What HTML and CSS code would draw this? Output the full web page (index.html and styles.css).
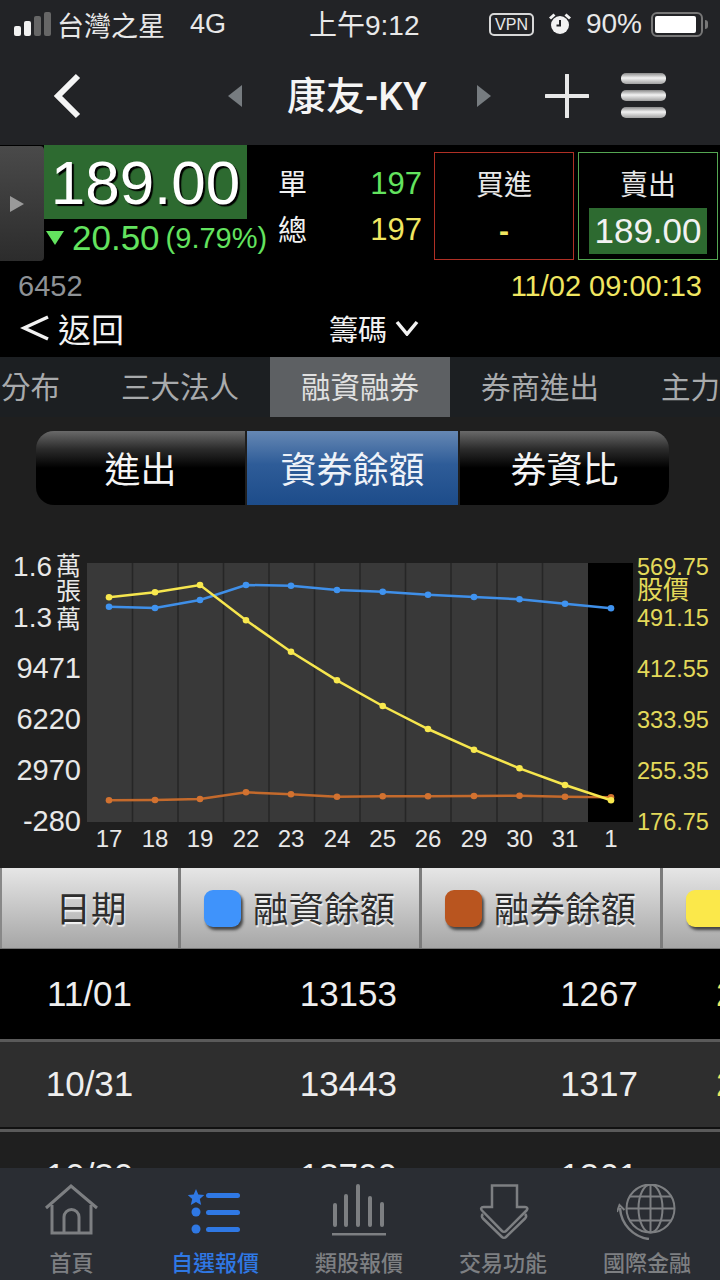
FILE: index.html
```html
<!DOCTYPE html>
<html lang="zh-Hant">
  <head>
    <meta charset="UTF-8" />
    <meta name="viewport" content="width=device-width, initial-scale=1.0" />
    <title>康友-KY</title>
    <link rel="stylesheet" href="styles.css">
  </head>
  <body>
    <div class="status-bar">
      <div class="status-left">
        <div class="signal"><i></i><i></i><i class="off"></i><i class="off"></i></div>
        <span class="carrier">台灣之星</span>
        <span class="network">4G</span>
      </div>
      <div class="status-time">上午9:12</div>
      <div class="status-right">
        <span class="vpn">VPN</span>
        <svg class="alarm" width="24" height="24" viewBox="0 0 24 24">
          <circle cx="12" cy="13" r="9" fill="#f2f2f2" />
          <path d="M12 8v5.5H8.5" fill="none" stroke="#222326" stroke-width="2" />
          <path d="M2 6.5 6.5 2.5M22 6.5 17.5 2.5" stroke="#f2f2f2" stroke-width="3" />
        </svg>
        <span class="pct">90%</span>
        <div class="battery"><div class="battery-level"></div></div>
        <div class="battery-tip"></div>
      </div>
    </div>

    <div class="nav-bar">
      <svg class="nav-back" width="32" height="48" viewBox="0 0 32 48">
        <path d="M26 4 6 24l20 20" fill="none" stroke="#f5f5f5" stroke-width="6" />
      </svg>
      <div class="nav-title">
        <div class="arrow-left"></div>
        <span class="stock-name">康友-KY</span>
        <div class="arrow-right"></div>
      </div>
      <svg class="nav-plus" width="44" height="44" viewBox="0 0 44 44">
        <path d="M22 1v42M1 22h42" stroke="#e8e8e8" stroke-width="4" stroke-linecap="round" />
      </svg>
      <div class="nav-menu"><i></i><i></i><i></i></div>
    </div>

    <div class="quote">
      <div class="quote-main">
        <div class="drawer"><div class="drawer-arrow"></div></div>
        <div class="price-block">
          <div class="price">189.00</div>
          <div class="change"><span class="down-arrow"></span><span class="change-val">20.50</span><span class="change-pct">(9.79%)</span></div>
        </div>
        <div class="volumes">
          <div class="vol-row"><span>單</span><b class="green">197</b></div>
          <div class="vol-row"><span>總</span><b class="yellow">197</b></div>
        </div>
        <div class="order-box buy">
          <div class="order-label">買進</div>
          <div class="order-val">-</div>
        </div>
        <div class="order-box sell">
          <div class="order-label">賣出</div>
          <div class="order-val">189.00</div>
        </div>
      </div>
      <div class="quote-info">
        <span class="code">6452</span>
        <span class="stamp">11/02 09:00:13</span>
      </div>
      <div class="quote-actions">
        <div class="back-link">
          <svg width="30" height="28" viewBox="0 0 30 28"><path d="M28 3 4 14l24 11" fill="none" stroke="#f2f2f2" stroke-width="3.5" /></svg>
          <span>返回</span>
        </div>
        <div class="chips">
          <span>籌碼</span>
          <svg width="24" height="16" viewBox="0 0 24 16"><path d="M2 2l10 12L22 2" fill="none" stroke="#f2f2f2" stroke-width="3.5" /></svg>
        </div>
      </div>
    </div>

    <div class="tabs">
      <div class="tab tab-first">分布</div>
      <div class="tab">三大法人</div>
      <div class="tab active">融資融券</div>
      <div class="tab">券商進出</div>
      <div class="tab tab-last">主力</div>
    </div>

    <div class="content">
      <div class="segment">
        <div class="seg-item">進出</div>
        <div class="seg-item selected">資券餘額</div>
        <div class="seg-item">券資比</div>
      </div>

      <!-- 차트 -->
      <svg class="chart" width="720" height="320" viewBox="0 545 720 320">
        <rect x="87" y="563" width="501" height="259" fill="#393939" />
        <rect x="588" y="563" width="45" height="259" fill="#000" />
        <path d="M132.5 563v259M178 563v259M223.5 563v259M269 563v259M314.5 563v259M360 563v259M405.5 563v259M451 563v259M497 563v259M542.5 563v259" stroke="#262626" stroke-width="1.5" />
        <polyline class="line-blue" points="109,606.7 155,608 200,600 246,585 291,585.7 337,590 382.7,591.7 428,594.7 474,597 519.5,599.3 565,603.7 611,608.3" />
        <g class="dots-blue"></g>
        <polyline class="line-orange" points="109,800.3 155,800 200,799 246,792.3 291,794.3 337,796.7 382.7,796.3 428,796.3 474,796 519.5,795.7 565,796.7 611,797.3" />
        <g class="dots-orange"></g>
        <polyline class="line-yellow" points="109,597.3 155,592.3 200,585 246,620.3 291,651.7 337,680.3 382.7,706 428,729 474,749.7 519.5,768.3 565,785 611,800.3" />
        <g class="dots-yellow"></g>

        <g class="axis-left">
          <text class="axis-short" x="52" y="576" text-anchor="end">1.6</text>
          <text class="axis-unit" x="81" y="575" text-anchor="end">萬</text>
          <text class="axis-unit" x="81" y="600" text-anchor="end">張</text>
          <text class="axis-short" x="52" y="627" text-anchor="end">1.3</text>
          <text class="axis-unit" x="81" y="628" text-anchor="end">萬</text>
          <text x="81" y="678" text-anchor="end">9471</text>
          <text x="81" y="729" text-anchor="end">6220</text>
          <text x="81" y="780" text-anchor="end">2970</text>
          <text x="81" y="831" text-anchor="end">-280</text>
        </g>
        <g class="axis-right">
          <text x="637" y="575">569.75</text>
          <text x="637" y="599" class="axis-cjk">股價</text>
          <text x="637" y="626">491.15</text>
          <text x="637" y="677">412.55</text>
          <text x="637" y="728">333.95</text>
          <text x="637" y="779">255.35</text>
          <text x="637" y="830">176.75</text>
        </g>
        <g class="axis-bottom" text-anchor="middle">
          <text x="109" y="847">17</text>
          <text x="155" y="847">18</text>
          <text x="200" y="847">19</text>
          <text x="246" y="847">22</text>
          <text x="291" y="847">23</text>
          <text x="337" y="847">24</text>
          <text x="382.7" y="847">25</text>
          <text x="428" y="847">26</text>
          <text x="474" y="847">29</text>
          <text x="519.5" y="847">30</text>
          <text x="565" y="847">31</text>
          <text x="611" y="847">1</text>
        </g>
      </svg>

      <div class="table-head">
        <div class="th th-date">日期</div>
        <div class="th th-col"><span class="swatch blue"></span>融資餘額</div>
        <div class="th th-col"><span class="swatch orange"></span>融券餘額</div>
        <div class="th th-rest"><span class="swatch yel"></span></div>
      </div>
      <div class="row row-black">
        <span class="c-date">11/01</span><span class="c-a">13153</span><span class="c-b">1267</span><span class="c-c">2</span>
      </div>
      <div class="row row-gray">
        <span class="c-date">10/31</span><span class="c-a">13443</span><span class="c-b">1317</span><span class="c-c">2</span>
      </div>
      <div class="row row-dark">
        <span class="c-date">10/30</span><span class="c-a">13700</span><span class="c-b">1261</span>
      </div>
    </div>

    <div class="tab-bar">
      <div class="tb-item">
        <svg width="56" height="56" viewBox="0 0 56 56" fill="none" stroke="#7d7f82" stroke-width="3">
          <path d="M2 24 27 2l26 22" />
          <path d="M8 21v28h39V21" />
          <path d="M20 49V33a7.500 7.500 0 0 1 15 0v16" />
        </svg>
        <span>首頁</span>
      </div>
      <div class="tb-item current">
        <svg width="56" height="56" viewBox="0 0 56 56" fill="#2f78e4">
          <path d="M8 5l2.300 5.500 6 .5-4.500 4 1.400 6L8 18l-5.200 3 1.400-6L-.3 11l6-.5z" />
          <circle cx="8" cy="28" r="4.500" />
          <circle cx="8" cy="45" r="4.500" />
          <rect x="18" y="9" width="34" height="5" rx="2.500" />
          <rect x="18" y="26" width="34" height="5" rx="2.500" />
          <rect x="18" y="43" width="34" height="5" rx="2.500" />
        </svg>
        <span>自選報價</span>
      </div>
      <div class="tb-item">
        <svg width="56" height="56" viewBox="0 0 56 56" fill="#7d7f82">
          <rect x="1" y="19" width="4" height="24" rx="2" />
          <rect x="12" y="10" width="4" height="33" rx="2" />
          <rect x="24" y="0" width="4" height="43" rx="2" />
          <rect x="36" y="12" width="4" height="31" rx="2" />
          <rect x="48" y="18" width="4" height="25" rx="2" />
          <rect x="0" y="49" width="54" height="2.500" />
        </svg>
        <span>類股報價</span>
      </div>
      <div class="tb-item">
        <svg width="56" height="56" viewBox="0 0 56 56" fill="none" stroke="#7d7f82" stroke-width="2.500">
          <path d="M16 1.500h25v21.500h8c2.500 0 3 2 1.500 3.500L30 47c-1 1-3 1-4 0L6 26.500C4.500 25 5 23 7.500 23H16z" />
          <path d="M7 30c-1.500 1.500-1.500 3 0 4.500L26 53c1 1 3 1 4 0l19-18.500c1.500-1.500 1.500-3 0-4.500" />
        </svg>
        <span>交易功能</span>
      </div>
      <div class="tb-item">
        <svg width="62" height="56" viewBox="0 0 62 56" fill="none" stroke="#7d7f82" stroke-width="2">
          <circle cx="33.500" cy="24.500" r="24" />
          <ellipse cx="33.500" cy="24.500" rx="12" ry="24" />
          <path d="M33.500 .5v48M9.500 24.500h48M12.700 12.500h41.600M12.700 36.500h41.600" />
          <path d="M3 24c1 16 13 29 29 31" stroke-width="2.500" />
          <path d="M0 28l2.500-7 5 5" stroke-width="2" />
        </svg>
        <span>國際金融</span>
      </div>
    </div>

    <script>
      // 좌표 점 찍기
      document.querySelectorAll(".chart polyline").forEach((line) => {
        const group = line.nextElementSibling;
        line.getAttribute("points").split(" ").forEach((p) => {
          const xy = p.split(",");
          const dot = document.createElementNS("http://www.w3.org/2000/svg", "circle");
          dot.setAttribute("cx", xy[0]);
          dot.setAttribute("cy", xy[1]);
          dot.setAttribute("r", "3.300");
          group.appendChild(dot);
        });
      });
    </script>
  </body>
</html>
```

FILE: styles.css
```css
* {
  box-sizing: border-box;
}

html, body {
  margin: 0;
  padding: 0;
}

body {
  width: 720px;
  height: 1280px;
  overflow: hidden;
  background: #1f1f1f;
  color: #f2f2f2;
  font-family: "Liberation Sans", "Noto Sans CJK TC", sans-serif;
  display: flex;
  flex-direction: column;
}

/* status bar */
.status-bar {
  height: 50px;
  background: #222326;
  display: flex;
  align-items: center;
  justify-content: space-between;
  padding: 0 12px 2px 14px;
  font-size: 27px;
  color: #e8e8e8;
  position: relative;
}

.status-left, .status-right {
  display: flex;
  align-items: center;
}

.signal {
  display: flex;
  align-items: flex-end;
  gap: 3px;
  height: 24px;
  margin-right: 6px;
}

.signal i {
  width: 7px;
  background: #f2f2f2;
  border-radius: 2px;
}

.signal i:nth-child(1) { height: 10px; }
.signal i:nth-child(2) { height: 15px; }
.signal i:nth-child(3) { height: 20px; }
.signal i:nth-child(4) { height: 24px; }
.signal i.off { background: #666; }

.network {
  margin-left: 25px;
}

.status-time {
  position: absolute;
  left: 309px;
  top: 3px;
  font-size: 28px;
}

.vpn {
  font-size: 16px;
  border: 2px solid #d8d8d8;
  border-radius: 5px;
  padding: 1px 4px;
  line-height: 17px;
}

.alarm {
  margin-left: 14px;
}

.pct {
  margin-left: 14px;
  font-size: 28px;
}

.battery {
  width: 52px;
  height: 25px;
  border: 2px solid #777;
  border-radius: 6px;
  padding: 2px;
  margin-left: 9px;
}

.battery-level {
  width: 41px;
  height: 100%;
  background: #fff;
  border-radius: 2px;
}

.battery-tip {
  width: 3px;
  height: 9px;
  background: #777;
  margin-left: 2px;
  border-radius: 0 3px 3px 0;
}

/* nav */
.nav-bar {
  height: 95px;
  background: #222326;
  display: flex;
  align-items: center;
  padding: 0 0 4px 52px;
}

.nav-back {
  margin-right: 144px;
}

.nav-title {
  display: flex;
  align-items: center;
  width: 264px;
}

.stock-name {
  font-family: Roboto, "Noto Sans CJK TC", sans-serif;
  font-size: 39px;
  font-weight: 500;
  width: 146px;
  flex: none;
  margin: 0 44px 6px 45px;
  white-space: nowrap;
  color: #f5f5f5;
}

.arrow-left {
  flex: none;
  width: 0;
  height: 0;
  border-style: solid;
  border-width: 11px 14px 11px 0;
  border-color: transparent #777c80 transparent transparent;
}

.arrow-right {
  flex: none;
  width: 0;
  height: 0;
  border-style: solid;
  border-width: 11px 0 11px 14px;
  border-color: transparent transparent transparent #777c80;
}

.nav-plus {
  margin-left: 53px;
}

.nav-menu {
  display: flex;
  flex-direction: column;
  gap: 6px;
  margin-left: 32px;
}

.nav-menu i {
  display: block;
  width: 45px;
  height: 11px;
  border-radius: 5px;
  background: linear-gradient(#8a8a8a, #f2f2f2 45%, #a0a0a0);
}

/* quote */
.quote {
  height: 212px;
  background: #000;
}

.quote-main {
  display: flex;
  height: 116px;
}

.drawer {
  width: 44px;
  height: 115px;
  margin-top: 1px;
  background: linear-gradient(#4a4a4a, #2c2c2c);
  border-radius: 0 4px 4px 0;
  display: flex;
  align-items: center;
  padding-left: 10px;
}

.drawer-arrow {
  width: 0;
  height: 0;
  border-style: solid;
  border-width: 8px 0 8px 14px;
  border-color: transparent transparent transparent #9a9a9a;
}

.price-block {
  width: 234px;
}

.price {
  width: 203px;
  height: 74px;
  background: #2d6a30;
  color: #fff;
  font-size: 62px;
  line-height: 76px;
  text-align: center;
  text-shadow: 2px 2px 1px #000;
}

.change {
  display: flex;
  align-items: center;
  color: #63e35f;
  margin-top: 1px;
  height: 36px;
  white-space: nowrap;
}

.down-arrow {
  flex: none;
  width: 0;
  height: 0;
  border-style: solid;
  border-width: 14px 9px 0 9px;
  border-color: #63e35f transparent transparent transparent;
  margin: 0 8px 0 2px;
}

.change-val {
  font-size: 35px;
}

.change-pct {
  font-size: 29px;
  margin-left: 6px;
}

.volumes {
  width: 156px;
  padding-top: 16px;
}

.vol-row {
  display: flex;
  justify-content: space-between;
  align-items: center;
  height: 46px;
  font-size: 29px;
  padding-right: 12px;
}

.vol-row span {
  margin-bottom: 4px;
}

.vol-row b {
  font-weight: 400;
  font-size: 31px;
}

.green { color: #63e35f; }
.yellow { color: #f0e661; }

.order-box {
  width: 140px;
  height: 108px;
  margin-top: 7px;
  border: 1px solid #b03025;
  display: flex;
  flex-direction: column;
  align-items: center;
  font-size: 28px;
}

.order-box.sell {
  border-color: #54a652;
  margin-left: 4px;
}

.order-label {
  height: 50px;
  line-height: 66px;
  color: #e8e8e8;
}

.order-val {
  margin-top: 5px;
  height: 46px;
  line-height: 46px;
  font-size: 30px;
}

.buy .order-val {
  color: #f0e661;
  font-weight: 700;
}

.sell .order-val {
  width: 118px;
  background: #2d6a30;
  text-align: center;
  font-size: 35px;
}

.quote-info {
  display: flex;
  justify-content: space-between;
  padding: 6px 18px 0 18px;
  height: 44px;
  line-height: 38px;
  font-size: 29px;
}

.code { color: #8e9296; }
.stamp { color: #f0e661; }

.quote-actions {
  display: flex;
  align-items: center;
  padding: 3px 0 0 20px;
  height: 42px;
}

.back-link {
  display: flex;
  align-items: center;
  gap: 8px;
  width: 309px;
  font-size: 33px;
}

.chips {
  display: flex;
  align-items: center;
  gap: 8px;
  font-size: 29px;
}

/* tabs */
.tabs {
  height: 60px;
  background: #1c1f22;
  display: flex;
  overflow: hidden;
}

.tab {
  width: 180px;
  flex: none;
  text-align: center;
  font-size: 29.500px;
  line-height: 61px;
  color: #a8aaac;
}

.tab-first {
  width: 90px;
  text-align: left;
  padding-left: 1px;
}

.tab.active {
  background: #5d6063;
  color: #e0e0e0;
}

.tab-last {
  text-align: left;
  padding-left: 31px;
  width: 90px;
  white-space: nowrap;
}

/* content */
.content {
  flex: 1;
  overflow: hidden;
}

.segment {
  display: flex;
  width: 633px;
  height: 74px;
  margin: 14px 0 0 36px;
  border-radius: 18px;
  overflow: hidden;
}

.seg-item {
  flex: 1;
  text-align: center;
  font-size: 36px;
  line-height: 80px;
  background: linear-gradient(#6a6a6a, #2c2c2c 24%, #000 50%, #000);
  color: #f5f5f5;
}

.seg-item.selected {
  flex: none;
  width: 211px;
  margin: 0 2px;
  background: linear-gradient(#6688b4, #2e5c98 45%, #1d4c8a);
  color: #eef2f8;
}

.chart {
  display: block;
  margin-top: 40px;
}

.line-blue, .line-orange, .line-yellow {
  fill: none;
  stroke-width: 2.500;
}

.line-blue { stroke: #3f8fe8; }
.line-orange { stroke: #c46a2c; }
.line-yellow { stroke: #f6e64e; }
.dots-blue { fill: #3f93f0; }
.dots-orange { fill: #d27230; }
.dots-yellow { fill: #f8e84e; }

.axis-left text {
  font-size: 29px;
  fill: #e8e8e8;
}

.axis-left .axis-short {
  font-size: 28px;
}

.axis-left .axis-unit {
  font-size: 25px;
}

.axis-right text {
  font-size: 23.500px;
  fill: #e3d95a;
}

.axis-right .axis-cjk {
  font-size: 26px;
}

.axis-bottom text {
  font-size: 24px;
  fill: #e8e8e8;
}

/* table */
.table-head {
  display: flex;
  height: 81px;
  margin-top: 3px;
  background: linear-gradient(#e6e6e6, #a6a6a6);
  border-bottom: 1px solid #777;
  overflow: hidden;
}

.th {
  flex: none;
  display: flex;
  align-items: center;
  height: 80px;
  padding-bottom: 3px;
  font-size: 35.500px;
  color: #2e2e2e;
  text-shadow: 1px 2px 1px #f4f4f4;
  border-right: 3px solid #7c7c7c;
}

.th-date {
  width: 181px;
  justify-content: center;
  padding-left: 2px;
  border-left: 2px solid #888;
}

.th-col {
  width: 241px;
  padding-left: 23px;
}

.th-rest {
  width: 60px;
  padding-left: 23px;
  border-right: none;
}

.swatch {
  width: 37px;
  height: 37px;
  flex: none;
  border-radius: 9px;
  margin-right: 12px;
  margin-top: 3px;
  box-shadow: 2px 3px 3px #444;
}

.swatch.blue { background: #3f93fb; }
.swatch.orange { background: #b9551f; }
.swatch.yel { background: #fbe84a; width: 60px; }

.row {
  height: 90px;
  font-size: 35px;
  color: #eee;
  display: flex;
  align-items: center;
  white-space: nowrap;
}

.row span {
  flex: none;
}

.row-black {
  background: #000;
}

.row-gray {
  background: #2e2e2e;
  border-top: 3px solid #5a5a5a;
  border-bottom: 2px solid #111;
  padding-bottom: 2px;
}

.row-dark {
  background: #1f1f1f;
  border-top: 3px solid #5a5a5a;
}

.c-date {
  width: 181px;
  text-align: center;
  padding-right: 2px;
}

.c-a {
  width: 216px;
  text-align: right;
}

.c-b {
  width: 241px;
  text-align: right;
}

.c-c {
  margin-left: 78px;
  color: #f0e661;
}

/* bottom tabs */
.tab-bar {
  height: 112px;
  flex: none;
  background: #2a2d33;
  display: flex;
  padding-top: 16px;
}

.tb-item {
  flex: 1;
  display: flex;
  flex-direction: column;
  align-items: center;
  font-size: 22px;
  font-weight: 500;
  color: #7d7f82;
  position: relative;
}

.tb-item span {
  position: absolute;
  top: 61px;
  left: 50%;
  transform: translateX(-51%);
  white-space: nowrap;
}

.tb-item.current {
  color: #2f78e4;
}
```
